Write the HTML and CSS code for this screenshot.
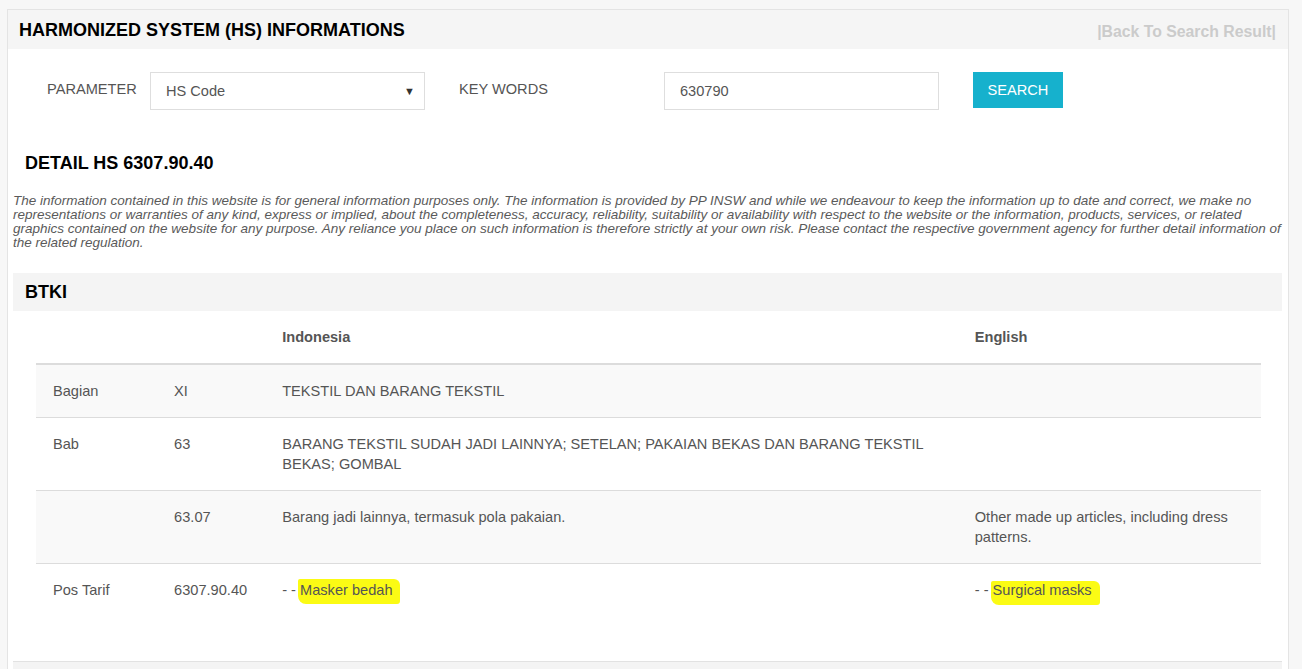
FILE: index.html
```html
<!DOCTYPE html>
<html lang="en">
<head>
<meta charset="utf-8">
<title>Harmonized System (HS) Informations</title>
<link rel="stylesheet" href="styles.css">
</head>
<body>
<div class="panel">
  <div class="panel-head">
    <h1 class="panel-title">HARMONIZED SYSTEM (HS) INFORMATIONS</h1>
    <a class="back-link" href="#">|Back To Search Result|</a>
  </div>
  <div class="panel-body">
    <form class="search-row">
      <label class="field-label">PARAMETER</label>
      <div class="select">
        <span>HS Code</span>
        <span class="caret">&#9660;</span>
      </div>
      <span></span>
      <label class="field-label">KEY WORDS</label>
      <div class="text-input">630790</div>
      <span></span>
      <button type="button" class="btn-search">SEARCH</button>
    </form>

    <div class="content">
      <h2 class="detail-title">DETAIL HS 6307.90.40</h2>
      <p class="disclaimer">The information contained in this website is for general information purposes only. The information is provided by PP INSW and while we endeavour to keep the information up to date and correct, we make no representations or warranties of any kind, express or implied, about the completeness, accuracy, reliability, suitability or availability with respect to the website or the information, products, services, or related graphics contained on the website for any purpose. Any reliance you place on such information is therefore strictly at your own risk. Please contact the respective government agency for further detail information of the related regulation.</p>

      <div class="section-bar"><h3 class="section-title">BTKI</h3></div>
      <div class="table-wrap">
        <table class="btki">
          <colgroup>
            <col class="c1"><col class="c2"><col class="c3"><col class="c4">
          </colgroup>
          <thead>
            <tr><th></th><th></th><th>Indonesia</th><th>English</th></tr>
          </thead>
          <tbody>
            <tr class="odd"><td>Bagian</td><td>XI</td><td>TEKSTIL DAN BARANG TEKSTIL</td><td></td></tr>
            <tr><td>Bab</td><td>63</td><td>BARANG TEKSTIL SUDAH JADI LAINNYA; SETELAN; PAKAIAN BEKAS DAN BARANG TEKSTIL BEKAS; GOMBAL</td><td></td></tr>
            <tr class="odd"><td></td><td>63.07</td><td>Barang jadi lainnya, termasuk pola pakaian.</td><td>Other made up articles, including dress patterns.</td></tr>
            <tr class="last"><td>Pos Tarif</td><td>6307.90.40</td><td>- - <span class="hl">Masker bedah</span></td><td>- - <span class="hl hl2">Surgical masks</span></td></tr>
          </tbody>
        </table>
      </div>
      <div class="section-bar next"></div>
    </div>
  </div>
</div>
</body>
</html>
```
FILE: styles.css
```css
html, body {
  margin: 0;
  padding: 0;
}
body {
  background: #f7f7f7;
  font-family: "Liberation Sans", Arial, sans-serif;
  color: #555;
  font-size: 14.6px;
  line-height: 20px;
}
.panel {
  margin: 9px 13px 0 7px;
  border: 1px solid #e4e4e4;
  border-bottom: 0;
  background: #fff;
  height: 660px;
  box-sizing: border-box;
}
.panel-head {
  height: 39px;
  background: #f5f5f5;
  display: flex;
  align-items: center;
  justify-content: space-between;
  padding: 0 12px 0 11px;
}
.panel-title {
  margin: 0;
  font-size: 18px;
  font-weight: bold;
  color: #000;
  line-height: 20px;
}
.back-link {
  font-size: 15.8px;
  font-weight: bold;
  color: #cbcbcb;
  text-decoration: none;
  margin-top: 4px;
}
.search-row {
  display: grid;
  grid-template-columns: 103px 275px 34px 205px 275px 34px 90px;
  align-items: start;
  margin: 23px 0 0 39px;
}
.field-label {
  line-height: 20px;
  padding-top: 7px;
  color: #555;
}
.select, .text-input {
  height: 38px;
  box-sizing: border-box;
  border: 1px solid #dedede;
  display: flex;
  align-items: center;
  padding: 0 15px;
  color: #555;
  background: #fff;
}
.select {
  justify-content: space-between;
  padding-right: 9px;
}
.caret {
  font-size: 11px;
  color: #333;
}
.btn-search {
  height: 36px;
  width: 90px;
  border: 0;
  background: #16b1cd;
  color: #fff;
  font-family: "Liberation Sans", Arial, sans-serif;
  font-size: 14.6px;
  padding: 0;
}
.content {
  padding: 0 6px 0 5px;
}
.detail-title {
  margin: 43px 0 0 12px;
  font-size: 18px;
  line-height: 20px;
  color: #000;
  font-weight: bold;
}
.disclaimer {
  margin: 21px 0 0 0;
  font-style: italic;
  font-size: 13.5px;
  line-height: 14px;
  color: #5a5a5a;
}
.section-bar {
  margin-top: 23px;
  height: 38px;
  background: #f4f4f4;
  display: flex;
  align-items: center;
  padding-left: 12px;
}
.section-title {
  margin: 0;
  font-size: 18px;
  font-weight: bold;
  color: #000;
  line-height: 20px;
}
.section-bar.next {
  margin-top: 0;
  border-top: 1px solid #e2e2e2;
  height: 20px;
}
.table-wrap {
  padding: 0 21px 45px 23px;
}
.btki {
  width: 100%;
  border-collapse: collapse;
  table-layout: fixed;
}
.c1 { width: 121px; }
.c2 { width: 108px; }
.c3 { width: 692px; }
.c4 { width: 303px; }
.btki th, .btki td {
  text-align: left;
  vertical-align: top;
  padding: 16px 17px 16px 17px;
  line-height: 20px;
}
.btki th {
  font-weight: bold;
  border-bottom: 2px solid #dcdcdc;
}
.btki td {
  border-top: 1px solid #dcdcdc;
}
.btki tbody tr:first-child td {
  border-top: 0;
}
.btki tr.odd td {
  background: #f9f9f9;
}
.hl {
  background: #fbfb14;
  color: #555;
  padding: 3px 7px 6px 2px;
  margin-left: -2px;
  border-radius: 2px 6px 3px 8px;
}
.hl2 {
  padding: 1px 8px 7px 2px;
}
```
